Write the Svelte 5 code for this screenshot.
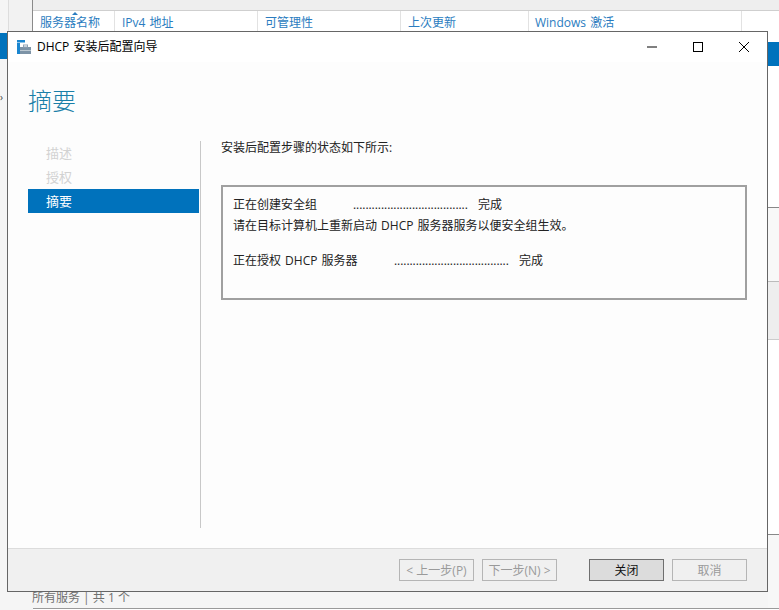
<script>
  const cols = [
    { t: '服务器名称', w: 82 },
    { t: 'IPv4 地址', w: 143 },
    { t: '可管理性', w: 143 },
    { t: '上次更新', w: 128 },
    { t: 'Windows 激活', w: 213 }
  ];
  const steps = ['描述', '授权', '摘要'];
  const dots = '.'.repeat(37);
</script>

<div class="page">
  <div class="leftrule"></div>
  <div class="topbar"></div>
  <div class="thead">
    {#each cols as c}
      <div class="th" style="width:{c.w}px">{c.t}</div>
    {/each}
  </div>
  <div class="sortmark"></div>
  <div class="sideblue"></div>
  <div class="sidearrow">›</div>
  <div class="rightstrip">
    <div class="rightblue"></div>
    <div class="rightpanel"></div>
    <div class="rightfoot"></div>
  </div>
  <div class="status">所有服务 | 共 1 个</div>
  <div class="statusbox"></div>

  <section class="win">
    <header class="titlebar">
      <svg class="appicon" width="15" height="14" viewBox="0 0 15 14">
        <rect x="0" y="0" width="8" height="2.5" fill="#1a86d0" />
        <rect x="0" y="3" width="3" height="11" fill="#1a86d0" />
        <rect x="3" y="7" width="11" height="3" fill="#7d93a6" />
        <rect x="3" y="10.5" width="11" height="3.5" fill="#7d93a6" />
        <rect x="6.5" y="5" width="4" height="2" fill="none" stroke="#8fa2b3" stroke-width="1" />
      </svg>
      <span class="title">DHCP 安装后配置向导</span>
      <div class="controls">
        <svg width="46" height="30" viewBox="0 0 46 30"><path d="M18 15H28" stroke="#000" fill="none" /></svg>
        <svg width="46" height="30" viewBox="0 0 46 30"><rect x="18.5" y="10.5" width="9" height="9" stroke="#000" fill="none" /></svg>
        <svg width="46" height="30" viewBox="0 0 46 30"><path d="M18 10L28 20M28 10L18 20" stroke="#000" fill="none" /></svg>
      </div>
    </header>

    <div class="body">
      <h1>摘要</h1>
      <div class="columns">
        <nav class="steps">
          {#each steps as s, i}
            <div class="step" class:active={i === 2}>{s}</div>
          {/each}
        </nav>
        <main class="content">
          <p class="intro">安装后配置步骤的状态如下所示:</p>
          <div class="result">
            <div class="line first"><span class="l1">正在创建安全组</span><span class="dots">{dots}</span><span>完成</span></div>
            <div class="line">请在目标计算机上重新启动 DHCP 服务器服务以便安全组生效。</div>
            <div class="line gap"><span class="l2">正在授权 DHCP 服务器</span><span class="dots">{dots}</span><span>完成</span></div>
          </div>
        </main>
      </div>
    </div>

    <footer class="foot">
      <button class="btn" disabled>&lt; 上一步(P)</button>
      <button class="btn next" disabled>下一步(N) &gt;</button>
      <button class="btn primary">关闭</button>
      <button class="btn" disabled>取消</button>
    </footer>
  </section>
</div>

<style>
  :global(body) {
    margin: 0;
    background: #f7f7f7;
  }
  .page {
    position: relative;
    width: 779px;
    height: 610px;
    overflow: hidden;
    font-family: "Open Sans", "Noto Sans CJK SC", sans-serif;
    font-size: 12px;
    word-spacing: 1px;
    background: #f5f5f5;
  }
  .leftrule {
    position: absolute;
    left: 8px;
    top: 0;
    width: 25px;
    height: 32px;
    box-sizing: border-box;
    background: #f2f2f2;
    border-left: 1px solid #dddddd;
    border-right: 1px solid #8a8a8a;
  }
  .topbar {
    height: 10px;
    margin-left: 33px;
    background: #eeeeee;
    border-bottom: 1px solid #cfcfcf;
  }
  .thead {
    display: flex;
    height: 21px;
    margin-left: 33px;
    background: #fff;
  }
  .th {
    box-sizing: border-box;
    padding: 4px 0 0 7px;
    color: #2a7cc0;
    border-right: 1px solid #e2e2e2;
    font-size: 12px;
    line-height: 16px;
    white-space: nowrap;
  }
  .th:last-child {
    padding-left: 6px;
  }
  .sortmark {
    position: absolute;
    left: 72px;
    top: 12px;
    border: 3px solid transparent;
    border-top: 0;
    border-bottom: 3px solid #2a7cc0;
  }
  .sideblue {
    position: absolute;
    left: 0;
    top: 33px;
    width: 7px;
    height: 26px;
    background: #0072bc;
  }
  .sidearrow {
    position: absolute;
    left: 0;
    top: 91px;
    font-size: 10px;
    line-height: 12px;
    color: #444;
  }
  .rightstrip {
    position: absolute;
    left: 768px;
    top: 11px;
    width: 11px;
    height: 597px;
    background: #fff;
  }
  .rightblue {
    position: absolute;
    left: -1px;
    top: 31px;
    width: 12px;
    height: 24px;
    background: #0072bc;
  }
  .rightpanel {
    position: absolute;
    left: 0;
    top: 196px;
    width: 11px;
    height: 131px;
    background: linear-gradient(#f8f8f8 0 73px, #bbb 73px 74px, #eeeeee 74px);
    border-top: 1px solid #888;
    border-bottom: 1px solid #ccc;
  }
  .rightfoot {
    position: absolute;
    left: 0;
    top: 523px;
    width: 11px;
    height: 74px;
    background: #f7f7f7;
    border-top: 1px solid #888;
  }
  .status {
    position: absolute;
    left: 32px;
    top: 590px;
    color: #707070;
    line-height: 16px;
    word-spacing: 0;
  }
  .statusbox {
    position: absolute;
    left: 33px;
    top: 608px;
    width: 746px;
    height: 2px;
    box-sizing: border-box;
    background: #fff;
    border-top: 1px solid #9a9a9a;
  }
  .win {
    position: absolute;
    left: 7px;
    top: 31px;
    box-sizing: border-box;
    width: 761px;
    height: 561px;
    display: flex;
    flex-direction: column;
    background: #fdfdfd;
    border: 1px solid #666;
  }
  .titlebar {
    display: flex;
    align-items: center;
    height: 30px;
    flex: none;
    background: #fff;
    padding-left: 9px;
  }
  .appicon {
    margin-right: 5px;
  }
  .title {
    color: #000;
    font-size: 12px;
    line-height: 16px;
  }
  .controls {
    display: flex;
    margin-left: auto;
  }
  .body {
    flex: 1;
    min-height: 0;
    display: flex;
    flex-direction: column;
    padding: 0 0 20px 20px;
  }
  h1 {
    margin: 21px 0 0 0;
    font-size: 24px;
    line-height: 36px;
    font-weight: 300;
    color: #1a7fa8;
  }
  .columns {
    flex: 1;
    min-height: 0;
    display: flex;
    margin-top: 22px;
  }
  .steps {
    box-sizing: border-box;
    width: 173px;
    padding-right: 1px;
    border-right: 1px solid #c8c8c8;
  }
  .step {
    height: 24px;
    padding-left: 18px;
    line-height: 24px;
    color: #d2d2d2;
    font-size: 13px;
  }
  .step.active {
    background: #0072bc;
    color: #fff;
  }
  .content {
    flex: 1;
    padding-left: 20px;
  }
  .intro {
    margin: 0;
    line-height: 14px;
    color: #222;
  }
  .result {
    box-sizing: border-box;
    width: 526px;
    height: 115px;
    margin-top: 30px;
    padding: 8px 10px;
    border: 2px solid #a0a0a0;
    color: #222;
  }
  .line {
    display: flex;
    line-height: 20px;
    height: 20px;
    white-space: nowrap;
  }
  .first {
    height: 21px;
  }
  .gap {
    margin-top: 15px;
  }
  .l1 {
    width: 120px;
  }
  .l2 {
    width: 161px;
  }
  .dots {
    width: 125px;
    letter-spacing: -0.05px;
  }
  .foot {
    flex: none;
    display: flex;
    align-items: center;
    gap: 8px;
    height: 43px;
    box-sizing: border-box;
    background: #f0f0f0;
    border-top: 1px solid #dcdcdc;
    padding-left: 391px;
  }
  .btn {
    box-sizing: border-box;
    width: 75px;
    height: 22px;
    padding: 0;
    border: 1px solid #b5b5b5;
    background: #f0f0f0;
    color: #9a9a9a;
    font-family: inherit;
    font-size: 12px;
    word-spacing: 0;
  }
  .next {
    margin-right: 24px;
  }
  .primary {
    background: #dcdcdc;
    color: #111;
    border-color: #6f6f6f;
  }
</style>
